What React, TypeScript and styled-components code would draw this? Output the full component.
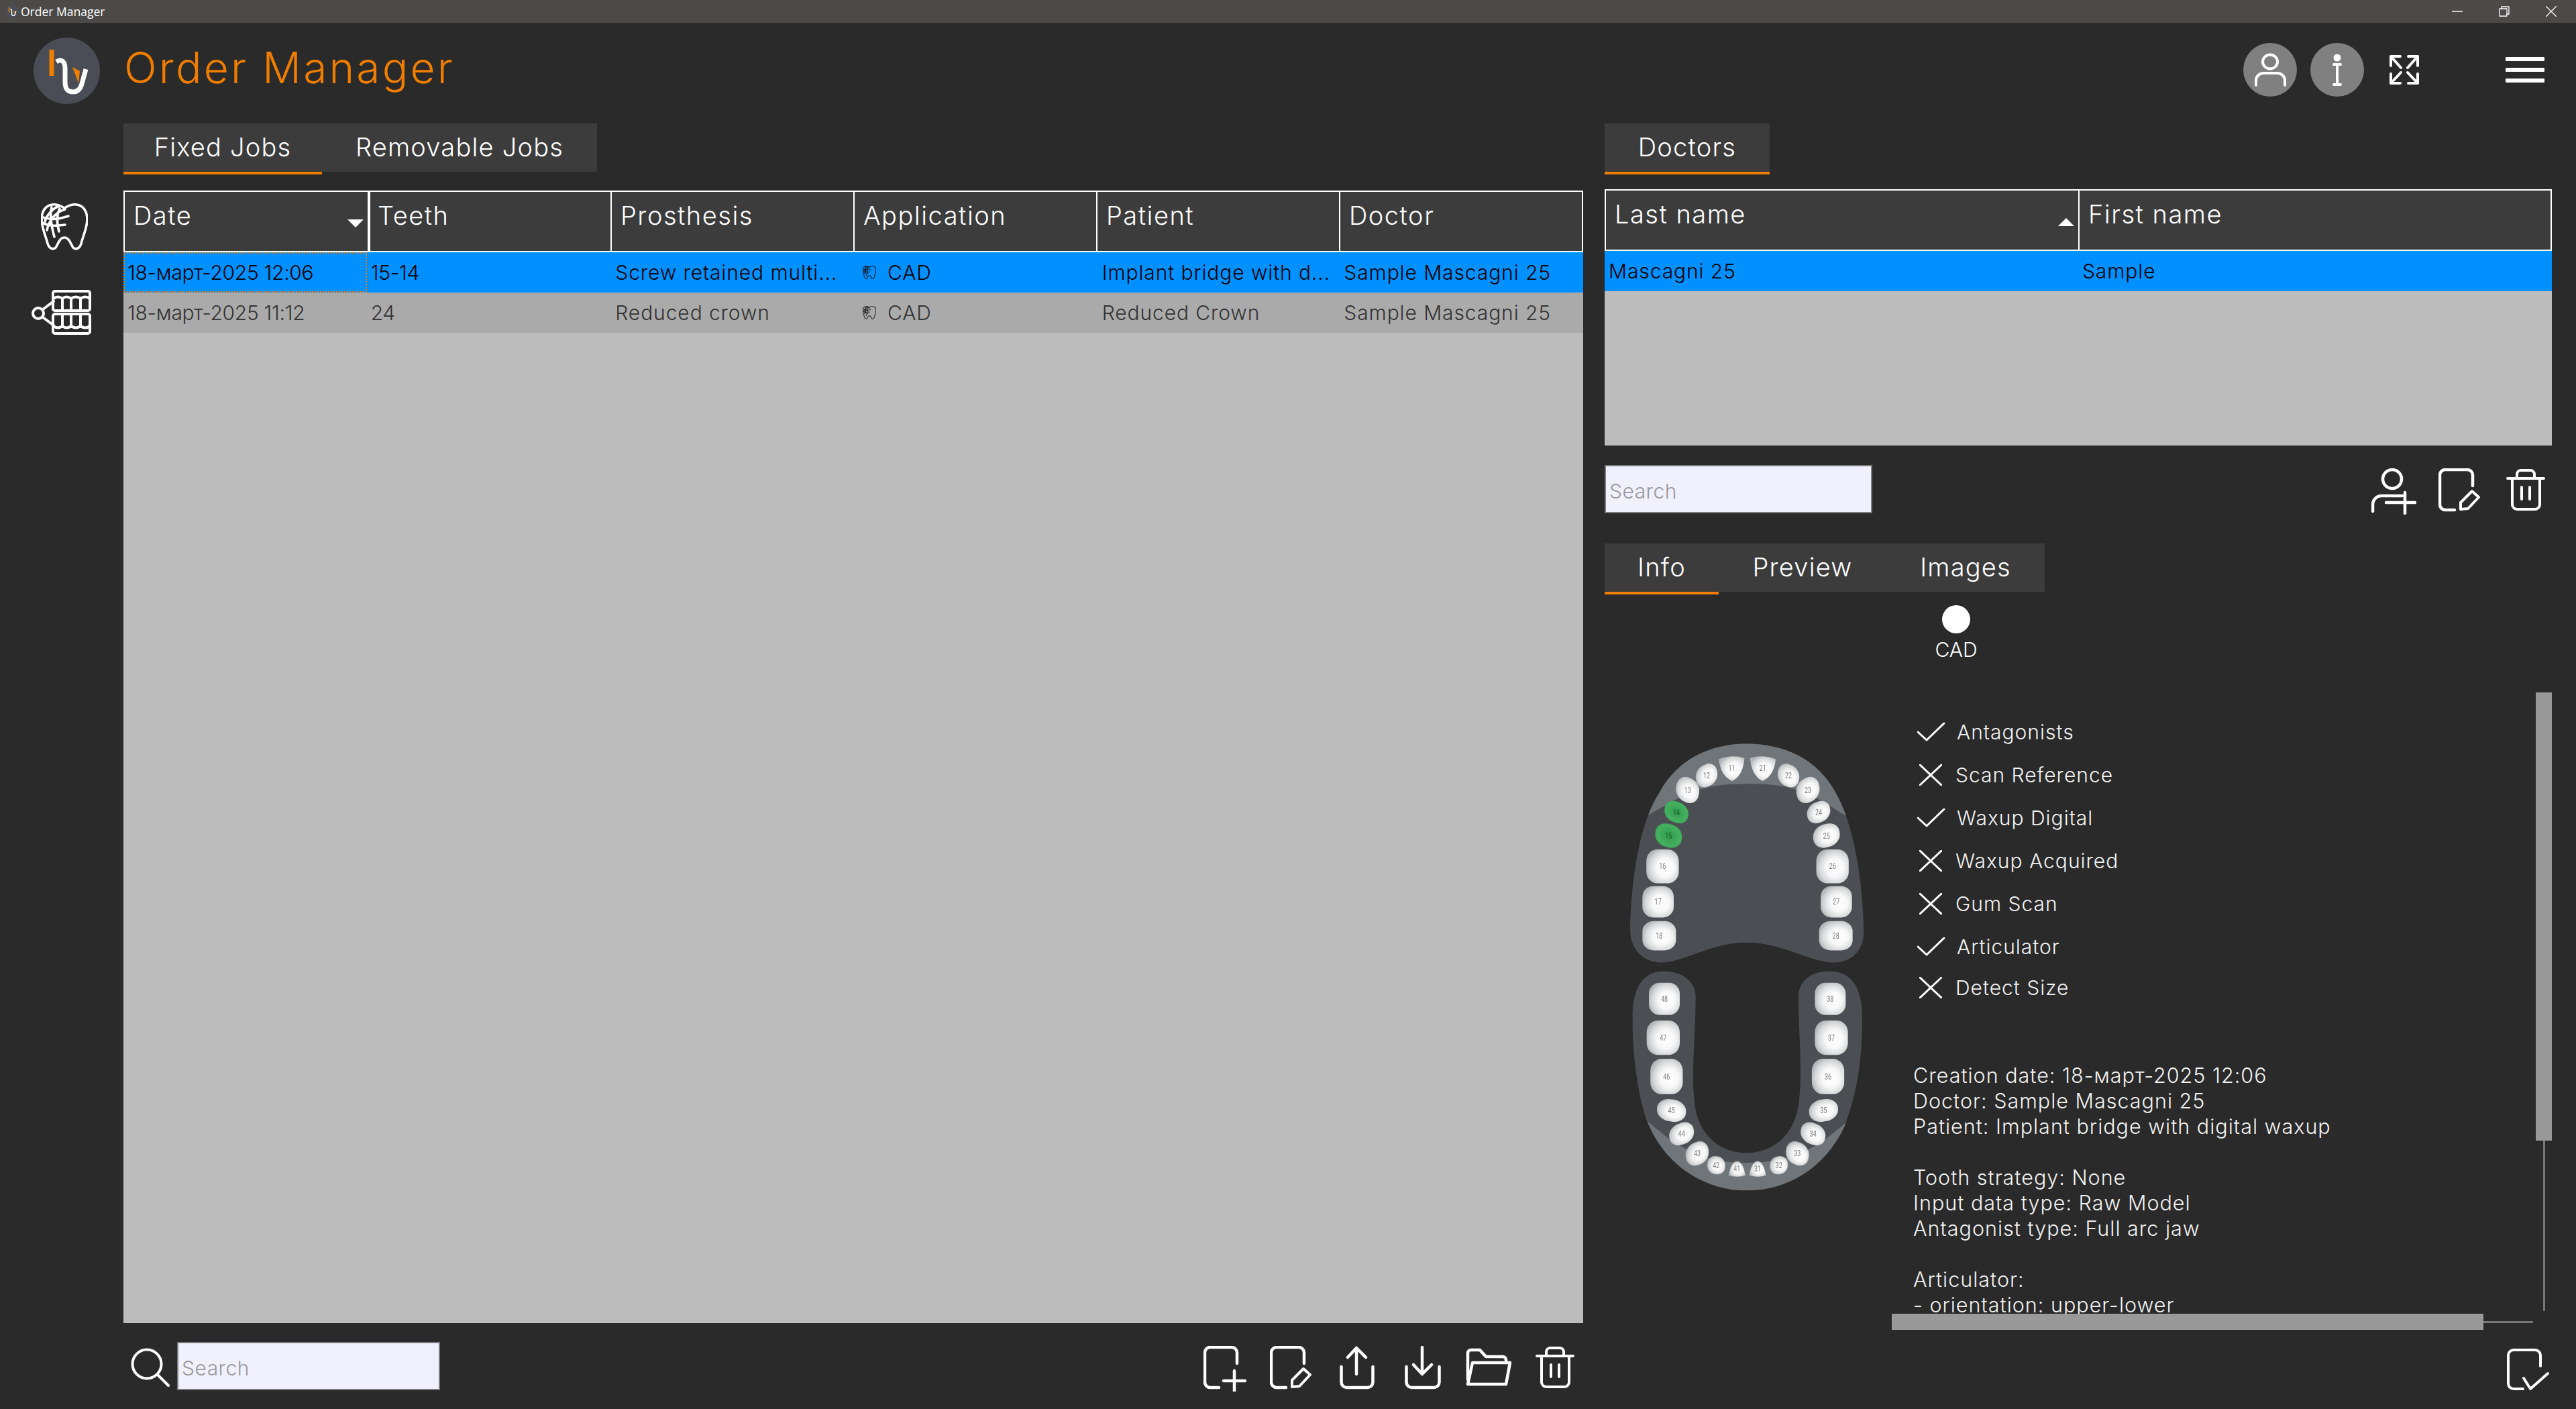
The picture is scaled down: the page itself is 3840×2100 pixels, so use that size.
import React from 'react';
import styled, { createGlobalStyle } from 'styled-components';

const FONT = '"Inter", "Liberation Sans", sans-serif';
const ORANGE = '#ef7d00';

const GlobalStyle = createGlobalStyle`
  html, body {
    margin: 0;
    padding: 0;
    background: #2a2a2a;
  }
  * {
    box-sizing: border-box;
  }
`;

const Root = styled.div`
  display: flex;
  flex-direction: column;
  width: 3840px;
  height: 2100px;
  overflow: hidden;
  background: #2a2a2a;
  color: #fff;
  font-family: ${FONT};
`;

const TitleBar = styled.div`
  display: flex;
  align-items: center;
  flex: 0 0 34px;
  padding: 0 29px 0 8px;
  background: #4b4a48;
`;

const TitleBarName = styled.span`
  margin-left: 3px;
  font-family: "Open Sans", sans-serif;
  font-size: 17.5px;
  color: #fff;
`;

const WindowControls = styled.div`
  display: flex;
  align-items: center;
  gap: 54px;
  margin-left: auto;
`;

const Header = styled.header`
  display: flex;
  align-items: flex-start;
  flex: 0 0 150px;
  padding: 22px 47px 0 50px;
`;

const Title = styled.h1`
  margin: 0 0 0 36px;
  font-size: 64px;
  line-height: 90px;
  font-weight: 300;
  letter-spacing: 3.2px;
  color: ${ORANGE};
`;

const HeaderActions = styled.div`
  display: flex;
  align-items: center;
  margin: 8px 0 0 auto;
`;

const RoundButton = styled.div`
  display: flex;
  width: 80px;
  height: 80px;
  margin-right: 20px;
  border-radius: 50%;
  background: #808080;
`;

const ExpandButton = styled.div`
  display: flex;
  margin: 0 129px 0 18px;
`;

const Hamburger = styled.div`
  display: flex;
  flex-direction: column;
  gap: 10px;
  width: 58px;
`;

const HamburgerBar = styled.span`
  height: 6px;
  background: #fff;
  border-radius: 1px;
`;

const Main = styled.main`
  display: flex;
  flex: 1;
  min-height: 0;
`;

const Sidebar = styled.nav`
  display: flex;
  flex-direction: column;
  flex: 0 0 184px;
  padding-top: 119px;
`;

const SideIcon = styled.div<{ $left: number; $top?: number }>`
  display: flex;
  margin-left: ${(p) => p.$left}px;
  margin-top: ${(p) => p.$top || 0}px;
`;

const LeftPanel = styled.section`
  display: flex;
  flex-direction: column;
  flex: 0 0 2176px;
`;

const RightPanel = styled.section`
  display: flex;
  flex-direction: column;
  flex: 0 0 1412px;
  margin-left: 32px;
`;

const Tabs = styled.div`
  display: flex;
  align-self: flex-start;
  height: 76px;
`;

const Tab = styled.div<{ $active?: boolean; $width: number }>`
  display: flex;
  justify-content: center;
  align-items: center;
  width: ${(p) => p.$width}px;
  height: 76px;
  padding-bottom: 3px;
  background: #3c3c3c;
  border-bottom: 4px solid ${(p) => (p.$active ? ORANGE : '#2a2a2a')};
  font-size: 38px;
  font-weight: 300;
  letter-spacing: 1.2px;
  white-space: nowrap;
`;

const JobsTable = styled.div`
  display: flex;
  flex-direction: column;
  flex: 1;
  min-height: 0;
  margin-top: 24px;
  background: #bcbcbc;
`;

const DoctorsTable = styled(JobsTable)`
  flex: 0 0 382px;
  margin-top: 22px;
`;

const HeaderRow = styled.div<{ $cols: number }>`
  display: grid;
  grid-template-columns: repeat(${(p) => p.$cols}, 1fr);
  height: 92px;
  border: 2px solid #fff;
  background: #3c3c3c;
`;

const HeaderCell = styled.div<{ $thick?: boolean; $first?: boolean }>`
  position: relative;
  padding: 12px 0 0 ${(p) => (p.$thick ? 11 : 13)}px;
  border-left: ${(p) => (p.$first ? 0 : p.$thick ? 4 : 2)}px solid #fff;
  font-size: 38px;
  line-height: 46px;
  font-weight: 300;
  letter-spacing: 1.5px;
`;

const SortMark = styled.span<{ $up?: boolean }>`
  position: absolute;
  right: 6px;
  top: 41px;
  width: 0;
  height: 0;
  border-left: 12px solid transparent;
  border-right: 12px solid transparent;
  ${(p) =>
    p.$up ? 'border-bottom: 12px solid #fff;' : 'border-top: 12px solid #fff;'}
`;

const DataRow = styled.div<{ $cols: number; $selected?: boolean }>`
  display: grid;
  grid-template-columns: repeat(${(p) => p.$cols}, 1fr);
  height: 60px;
  background: ${(p) => (p.$selected ? '#0090ff' : '#aaaaaa')};
  color: ${(p) => (p.$selected ? '#000' : '#333')};
`;

const DataCell = styled.div<{ $focused?: boolean; $indent?: number; $tight?: boolean }>`
  display: flex;
  align-items: center;
  overflow: hidden;
  padding-left: ${(p) => p.$indent || 4}px;
  border: 2px ${(p) => (p.$focused ? `dotted ${ORANGE}` : 'solid transparent')};
  font-size: 30px;
  font-weight: 300;
  letter-spacing: ${(p) => (p.$tight ? -0.3 : 0.9)}px;
  white-space: nowrap;
`;

const CadMark = styled.span`
  display: flex;
  margin-right: 17px;
`;

const Toolbar = styled.div`
  display: flex;
  align-items: flex-start;
  flex: 0 0 128px;
  padding-top: 28px;
`;

const SearchIcon = styled.div`
  display: flex;
  margin: 9px 11px 0 11px;
`;

const SearchInput = styled.input<{ $width: number }>`
  width: ${(p) => p.$width}px;
  height: 72px;
  padding: 6px 0 0 5px;
  background: #f0f0ff;
  border: 2px solid #7a7a7a;
  border-radius: 0;
  outline: none;
  font-family: ${FONT};
  font-size: 30px;
  font-weight: 300;
  letter-spacing: 0.5px;

  &::placeholder {
    color: #999;
    opacity: 1;
  }
`;

const IconGroup = styled.div`
  display: flex;
  margin: 6px -7px 0 auto;
`;

const IconSlot = styled.div`
  display: flex;
  justify-content: center;
  width: 98.4px;
`;

const DoctorTools = styled.div`
  display: flex;
  align-items: flex-start;
  margin: 29px 0 43px;
`;

const DoctorIconGroup = styled(IconGroup)`
  margin: 5px -10px 0 auto;
`;

const InfoArea = styled.div`
  display: flex;
  flex-direction: column;
  flex: 1;
  min-height: 0;
`;

const TypeBlock = styled.div`
  display: flex;
  flex-direction: column;
  align-items: center;
  flex: 0 0 146px;
  width: 120px;
  margin-left: 464px;
  padding-top: 16px;
`;

const TypeDot = styled.span`
  width: 42px;
  height: 42px;
  border-radius: 50%;
  background: #fff;
`;

const TypeLabel = styled.span`
  margin-top: 6px;
  font-size: 30px;
  line-height: 36px;
  font-weight: 300;
`;

const InfoBody = styled.div`
  display: flex;
`;

const JawColumn = styled.div`
  flex: 0 0 428px;
  padding: 49px 0 0 8px;
`;

const DetailsPane = styled.div`
  display: grid;
  grid-template-columns: 960px 24px;
  grid-template-rows: 926px 24px;
  flex: 0 0 984px;
`;

const DetailsContent = styled.div`
  overflow: hidden;
  padding-top: 27px;
`;

const ChecksList = styled.ul`
  list-style: none;
  margin: 0;
  padding: 0 0 0 38px;
`;

const CheckRow = styled.li`
  display: flex;
  align-items: center;
  height: 64px;
  font-size: 30px;
  color: #f2f2f2;
  font-weight: 300;
  letter-spacing: 1px;

  &:last-child {
    margin-top: -3px;
  }
`;

const CheckIcon = styled.span`
  display: flex;
  justify-content: center;
  flex: 0 0 40px;
  margin-right: 17px;
`;

const Specs = styled.div`
  margin-top: 80px;
  padding-left: 32px;
  font-size: 30.5px;
  line-height: 38px;
  font-weight: 300;
  letter-spacing: 1px;
  color: #f2f2f2;
`;

const SpecGroup = styled.div`
  margin-bottom: 38px;
`;

const VTrack = styled.div`
  position: relative;
  display: flex;
  justify-content: center;
  height: 922px;

  &::before {
    content: '';
    width: 3px;
    height: 100%;
    background: #777;
  }
`;

const VThumb = styled.div`
  position: absolute;
  top: 0;
  left: 0;
  width: 24px;
  height: 668px;
  background: #999;
`;

const HTrack = styled.div`
  position: relative;
  display: flex;
  align-items: center;
  width: 956px;

  &::before {
    content: '';
    width: 100%;
    height: 3px;
    background: #777;
  }
`;

const HThumb = styled.div`
  position: absolute;
  top: 0;
  left: 0;
  width: 882px;
  height: 24px;
  background: #999;
`;

const ConfirmRow = styled.div`
  display: flex;
  justify-content: flex-end;
  padding: 28px 4px 0 0;
`;

const Line = styled.svg.attrs({ fill: 'none', stroke: '#fff', strokeLinecap: 'round', strokeLinejoin: 'round' })``;

const Logo = ({ size }: { size: number }) => (
  <svg width={size} height={size} viewBox="50 56 99 99">
    <circle cx="99.5" cy="105.5" r="49.5" fill="#4a4d55" />
    <rect x="73.5" y="74" width="7" height="39" fill={ORANGE} />
    <path d="M108 100 L119 106 L117 124 Z" fill={ORANGE} />
    <path
      d="M84 92 C92 87 97 92 97 102 L97 122 C97 135 103 137 109 137 C116 137 120 132 122 125 L128 103"
      fill="none"
      stroke="#fff"
      strokeWidth="7"
    />
  </svg>
);

const ToothIcon = ({ size, color, width }: { size: number; color: string; width: number }) => (
  <Line width={size} height={size} viewBox="0 0 70 70" strokeWidth={width} style={{ stroke: color }}>
    <path d="M35 7C42 3 48 1 53 2C63 3 69 12 69 24C69 36 63 48 60 60C58 67 52 70 48 66C44 60 42 51 35 51C28 51 26 60 22 66C18 70 12 67 10 60C7 48 1 36 1 24C1 12 7 3 17 2C22 1 28 3 35 7" />
    <path d="M36 9C24 12 12 24 9 40M27 4C17 8 8 18 5 30M3 21C20 26 30 22 41 19M4 30C15 35 25 33 36 32M16 6C13 18 15 32 20 50M28 8C23 18 23 28 27 42" />
  </Line>
);

const ArticulatorIcon = () => (
  <Line width="90" height="67" viewBox="0 0 90 67" strokeWidth="4">
    <circle cx="11" cy="35" r="8" />
    <path d="M18 29L34 17M18 41L34 53" />
    <rect x="33" y="2" width="55" height="29" rx="3" />
    <rect x="33" y="36" width="55" height="29" rx="3" />
    <path d="M34 13q6-5 13 0q6-5 13 0q7-5 14 0q7-5 14 0M47 13V30M60 13V30M74 13V30" />
    <path d="M34 54q6 5 13 0q6 5 13 0q7 5 14 0q7 5 14 0M47 37V54M60 37V54M74 37V54" />
  </Line>
);

const MinimizeIcon = () => (
  <Line width="16" height="16" viewBox="0 0 16 16" strokeWidth="1.4" strokeLinecap="butt">
    <path d="M0 8H16" />
  </Line>
);

const RestoreIcon = () => (
  <Line width="16" height="16" viewBox="0 0 16 16" strokeWidth="1.3" strokeLinecap="butt">
    <rect x="1" y="4" width="11" height="11" />
    <path d="M4 4V1H15V12H12" />
  </Line>
);

const CloseIcon = () => (
  <Line width="16" height="16" viewBox="0 0 16 16" strokeWidth="1.3" strokeLinecap="butt">
    <path d="M0 0L16 16M16 0L0 16" />
  </Line>
);

const PersonIcon = () => (
  <Line width="80" height="80" viewBox="0 0 80 80" strokeWidth="4">
    <ellipse cx="40" cy="28" rx="11" ry="10.5" />
    <path d="M19 63V56A11 11 0 0 1 30 45H51A11 11 0 0 1 62 56V63" />
  </Line>
);

const InfoIcon = () => (
  <Line width="80" height="80" viewBox="0 0 80 80" strokeWidth="4">
    <circle cx="40" cy="22" r="3.5" fill="#fff" />
    <path d="M35 32H45M40 32V62M35 62H45" />
  </Line>
);

const ExpandIcon = () => (
  <Line width="44" height="44" viewBox="0 0 44 44" strokeWidth="4">
    <path d="M2 16V2H16M2 2L17 19M28 2H42V16M42 2L27 19M2 28V42H16M2 42L17 26M42 28V42H28M42 42L27 26" />
  </Line>
);

const MagnifierIcon = () => (
  <Line width="58" height="58" viewBox="0 0 58 58" strokeWidth="4">
    <circle cx="24" cy="24" r="21.5" />
    <path d="M41 41L56 56" />
  </Line>
);

const DocPlusIcon = () => (
  <Line width="64" height="68" viewBox="0 0 64 68" strokeWidth="4.5">
    <path d="M50 26V10A8 8 0 0 0 42 2H10A8 8 0 0 0 2 10V54A8 8 0 0 0 10 62H23" />
    <path d="M30 52H62M46 37V67" />
  </Line>
);

const DocEditIcon = () => (
  <Line width="62" height="68" viewBox="0 0 62 68" strokeWidth="4.5">
    <path d="M51 26V10A8 8 0 0 0 43 2H10A8 8 0 0 0 2 10V54A8 8 0 0 0 10 62H24" />
    <path d="M33 51L50 34L60 43L44 60L33 61Z" strokeWidth="4" />
  </Line>
);

const UploadIcon = () => (
  <Line width="52" height="68" viewBox="0 0 52 68" strokeWidth="4.5">
    <path d="M2.5 31V54A8 8 0 0 0 10 62H42A8 8 0 0 0 49.5 54V31" />
    <path d="M25 42V3M12 17L25 3L39 17" />
  </Line>
);

const DownloadIcon = () => (
  <Line width="54" height="68" viewBox="0 0 54 68" strokeWidth="4.5">
    <path d="M2.5 31V54A8 8 0 0 0 10 62H44A8 8 0 0 0 51.5 54V31" />
    <path d="M26 2V41M13 28L26 42L40 28" />
  </Line>
);

const FolderIcon = () => (
  <Line width="68" height="68" viewBox="0 0 68 68" strokeWidth="4.5">
    <path d="M3 50V10A5 5 0 0 1 8 6H21L30 16H56A5 5 0 0 1 60 21V25" />
    <path d="M10 25H66L60 57H3Z" />
  </Line>
);

const TrashIcon = () => (
  <Line width="58" height="68" viewBox="0 0 58 68" strokeWidth="4">
    <path d="M2 15H56M16 15V9A6 6 0 0 1 22 3H36A6 6 0 0 1 42 9V15" />
    <path d="M9 15V54A7 7 0 0 0 16 61H43A7 7 0 0 0 50 54V15M23 28V46M35 28V46" />
  </Line>
);

const PersonPlusIcon = () => (
  <Line width="67" height="69" viewBox="0 0 67 69" strokeWidth="4.5">
    <circle cx="31" cy="16" r="14" />
    <path d="M2 64V54A13 13 0 0 1 15 41H46" />
    <path d="M22 51H65M50 36V67" />
  </Line>
);

const DocCheckIcon = () => (
  <Line width="63" height="64" viewBox="0 0 63 64" strokeWidth="4">
    <path d="M50 26V10A8 8 0 0 0 42 2H10A8 8 0 0 0 2 10V52A8 8 0 0 0 10 60H24" />
    <path d="M25 44L35 60L61 37" />
  </Line>
);

const CheckMark = () => (
  <Line width="42" height="28" viewBox="0 0 42 28" strokeWidth="3" strokeLinecap="butt">
    <path d="M1 14L14 26L40 1" />
  </Line>
);

const CrossMark = () => (
  <Line width="34" height="32" viewBox="0 0 34 32" strokeWidth="3" strokeLinecap="butt">
    <path d="M1 1L33 31M33 1L1 31" />
  </Line>
);

type ToothSpot = {
  n: number;
  x: number;
  y: number;
  w: number;
  h: number;
  kind?: 'incisor' | 'lowerIncisor';
  r?: number;
};

const upperLeft: ToothSpot[] = [
  { n: 11, x: 545, y: 140, w: 115, h: 80, kind: 'incisor', r: -2 },
  { n: 12, x: 432, y: 163, w: 98, h: 72, r: -18 },
  { n: 13, x: 347, y: 210, w: 105, h: 80, r: 18 },
  { n: 14, x: 297, y: 282, w: 108, h: 68, r: 14 },
  { n: 15, x: 262, y: 358, w: 120, h: 76, r: 10 },
  { n: 16, x: 235, y: 458, w: 145, h: 110 },
  { n: 17, x: 215, y: 573, w: 140, h: 102 },
  { n: 18, x: 220, y: 683, w: 150, h: 95 },
];

const upperRight: ToothSpot[] = [
  { n: 21, x: 683, y: 140, w: 115, h: 80, kind: 'incisor', r: 2 },
  { n: 22, x: 798, y: 163, w: 98, h: 72, r: 18 },
  { n: 23, x: 885, y: 210, w: 105, h: 80, r: -18 },
  { n: 24, x: 933, y: 282, w: 105, h: 68, r: -14 },
  { n: 25, x: 968, y: 358, w: 120, h: 76, r: -10 },
  { n: 26, x: 995, y: 458, w: 145, h: 110 },
  { n: 27, x: 1012, y: 573, w: 140, h: 102 },
  { n: 28, x: 1010, y: 683, w: 150, h: 95 },
];

const lowerRight: ToothSpot[] = [
  { n: 48, x: 243, y: 888, w: 138, h: 105 },
  { n: 47, x: 238, y: 1014, w: 148, h: 112 },
  { n: 46, x: 253, y: 1140, w: 145, h: 115 },
  { n: 45, x: 275, y: 1250, w: 130, h: 72, r: 6 },
  { n: 44, x: 320, y: 1326, w: 112, h: 70, r: -14 },
  { n: 43, x: 390, y: 1390, w: 104, h: 74, r: -16 },
  { n: 42, x: 475, y: 1428, w: 80, h: 58, r: 6 },
  { n: 41, x: 568, y: 1440, w: 75, h: 50, kind: 'lowerIncisor' },
];

const lowerLeft: ToothSpot[] = [
  { n: 38, x: 985, y: 888, w: 138, h: 105 },
  { n: 37, x: 990, y: 1014, w: 148, h: 112 },
  { n: 36, x: 975, y: 1140, w: 145, h: 115 },
  { n: 35, x: 955, y: 1250, w: 130, h: 72, r: -6 },
  { n: 34, x: 908, y: 1326, w: 112, h: 70, r: 14 },
  { n: 33, x: 838, y: 1390, w: 104, h: 74, r: 16 },
  { n: 32, x: 755, y: 1428, w: 80, h: 58, r: -6 },
  { n: 31, x: 660, y: 1440, w: 75, h: 50, kind: 'lowerIncisor' },
];

const selectedTeeth = [14, 15];

const ToothShape = ({ spot }: { spot: ToothSpot }) => {
  const { n, x, y, w, h, kind, r } = spot;
  const green = selectedTeeth.includes(n);
  const fill = green ? 'url(#toothGreen)' : 'url(#toothWhite)';
  const hw = w / 2;
  const hh = h / 2;
  let shape = (
    <rect
      x={-hw}
      y={-hh}
      width={w}
      height={h}
      rx={hw * (h < 85 ? 0.9 : 0.68)}
      ry={hh * (h < 85 ? 0.92 : 0.68)}
      fill={fill}
    />
  );
  if (kind === 'incisor') {
    shape = (
      <path
        d={`M${-hw} ${-hh + 8}Q0 ${-hh - 6} ${hw} ${-hh + 8}Q${hw - 6} ${hh - 22} 8 ${hh - 2}Q0 ${hh + 3} -8 ${hh - 2}Q${-hw + 6} ${hh - 22} ${-hw} ${-hh + 8}Z`}
        fill={fill}
      />
    );
  }
  if (kind === 'lowerIncisor') {
    shape = (
      <path
        d={`M${-hw} ${hh - 4}Q0 ${hh + 4} ${hw} ${hh - 4}Q${hw - 12} ${-hh} 0 ${-hh}Q${-hw + 12} ${-hh} ${-hw} ${hh - 4}Z`}
        fill={fill}
      />
    );
  }
  return (
    <g>
      <g transform={`translate(${x} ${y}) rotate(${r || 0})`}>{shape}</g>
      <text
        x={x}
        y={y + 9}
        textAnchor="middle"
        fontFamily="Roboto, sans-serif"
        fontSize="27"
        fill={green ? '#1f5f30' : '#7d7d7d'}
      >
        {n}
      </text>
    </g>
  );
};

// traced on the 1260x1568 crop grid, hence preserveAspectRatio none
const JawChart = () => (
  <svg width="420" height="720" viewBox="0 0 1260 1568" preserveAspectRatio="none">
    <defs>
      <radialGradient id="toothWhite" cx="58%" cy="54%" r="60%">
        <stop offset="0%" stopColor="#ffffff" />
        <stop offset="45%" stopColor="#f8f8f8" />
        <stop offset="80%" stopColor="#d4d6d8" />
        <stop offset="100%" stopColor="#b4b7ba" />
      </radialGradient>
      <radialGradient id="toothGreen" cx="50%" cy="50%" r="60%">
        <stop offset="0%" stopColor="#2f9a4c" />
        <stop offset="70%" stopColor="#45b05f" />
        <stop offset="100%" stopColor="#3aa555" />
      </radialGradient>
      <clipPath id="upperBand">
        <path d="M150 300L260 255C400 195 500 190 620 190C760 190 850 200 980 260L1090 310V0H150Z" />
      </clipPath>
      <clipPath id="lowerBand">
        <path d="M140 1270L260 1340C400 1410 500 1420 610 1420C740 1420 860 1400 970 1340L1090 1270V1568H140Z" />
      </clipPath>
      <filter id="soft">
        <feGaussianBlur stdDeviation="1.6" />
      </filter>
    </defs>
    <g filter="url(#soft)">
      <path
        d="M90 660C95 500 130 320 220 220C300 110 450 60 610 60C780 60 930 110 1010 220C1090 320 1130 500 1135 670C1135 730 1080 770 1000 770C900 770 770 705 610 705C450 705 330 770 230 770C150 770 90 730 90 660Z"
        fill="#4c4f52"
      />
      <path
        d="M90 660C95 500 130 320 220 220C300 110 450 60 610 60C780 60 930 110 1010 220C1090 320 1130 500 1135 670C1135 730 1080 770 1000 770C900 770 770 705 610 705C450 705 330 770 230 770C150 770 90 730 90 660Z"
        fill="#70747a"
        clipPath="url(#upperBand)"
      />
      <path
        d="M240 798C150 798 100 850 100 950C100 1100 140 1250 175 1300C260 1440 440 1510 610 1510C790 1510 960 1440 1050 1300C1100 1200 1128 1100 1128 950C1128 850 1080 798 980 798C900 798 843 830 843 880C843 1000 860 1100 848 1200C840 1320 740 1388 610 1388C480 1388 380 1320 375 1200C365 1100 383 1000 383 880C383 830 320 798 240 798Z"
        fill="#4c4f52"
      />
      <path
        d="M240 798C150 798 100 850 100 950C100 1100 140 1250 175 1300C260 1440 440 1510 610 1510C790 1510 960 1440 1050 1300C1100 1200 1128 1100 1128 950C1128 850 1080 798 980 798C900 798 843 830 843 880C843 1000 860 1100 848 1200C840 1320 740 1388 610 1388C480 1388 380 1320 375 1200C365 1100 383 1000 383 880C383 830 320 798 240 798Z"
        fill="#70747a"
        clipPath="url(#lowerBand)"
      />
      {[...upperLeft, ...upperRight, ...lowerRight, ...lowerLeft].map((spot) => (
        <ToothShape key={spot.n} spot={spot} />
      ))}
    </g>
  </svg>
);

const jobColumns = ['Date', 'Teeth', 'Prosthesis', 'Application', 'Patient', 'Doctor'];

const jobs = [
  {
    date: '18-март-2025 12:06',
    teeth: '15-14',
    prosthesis: 'Screw retained multi...',
    patient: 'Implant bridge with d...',
    doctor: 'Sample Mascagni 25',
    selected: true,
  },
  {
    date: '18-март-2025 11:12',
    teeth: '24',
    prosthesis: 'Reduced crown',
    patient: 'Reduced Crown',
    doctor: 'Sample Mascagni 25',
    selected: false,
  },
];

const checks = [
  { label: 'Antagonists', done: true },
  { label: 'Scan Reference', done: false },
  { label: 'Waxup Digital', done: true },
  { label: 'Waxup Acquired', done: false },
  { label: 'Gum Scan', done: false },
  { label: 'Articulator', done: true },
  { label: 'Detect Size', done: false },
];

const specs = [
  [
    'Creation date: 18-март-2025 12:06',
    'Doctor: Sample Mascagni 25',
    'Patient: Implant bridge with digital waxup',
  ],
  ['Tooth strategy: None', 'Input data type: Raw Model', 'Antagonist type: Full arc jaw'],
  ['Articulator:', '- orientation: upper-lower'],
];

const App = () => {
  return (
    <Root>
      <GlobalStyle />
      <TitleBar>
        <Logo size={20} />
        <TitleBarName>Order Manager</TitleBarName>
        <WindowControls>
          <MinimizeIcon />
          <RestoreIcon />
          <CloseIcon />
        </WindowControls>
      </TitleBar>

      <Header>
        <Logo size={99} />
        <Title>Order Manager</Title>
        <HeaderActions>
          <RoundButton>
            <PersonIcon />
          </RoundButton>
          <RoundButton>
            <InfoIcon />
          </RoundButton>
          <ExpandButton>
            <ExpandIcon />
          </ExpandButton>
          <Hamburger>
            <HamburgerBar />
            <HamburgerBar />
            <HamburgerBar />
          </Hamburger>
        </HeaderActions>
      </Header>

      <Main>
        <Sidebar>
          <SideIcon $left={61}>
            <ToothIcon size={70} color="#fff" width={3.6} />
          </SideIcon>
          <SideIcon $left={46} $top={59}>
            <ArticulatorIcon />
          </SideIcon>
        </Sidebar>

        <LeftPanel>
          <Tabs>
            <Tab $active $width={296}>Fixed Jobs</Tab>
            <Tab $width={410}>Removable Jobs</Tab>
          </Tabs>
          <JobsTable>
            <HeaderRow $cols={6}>
              {jobColumns.map((column, i) => (
                <HeaderCell key={column} $first={i === 0} $thick={i === 1}>
                  {column}
                  {i === 0 && <SortMark />}
                </HeaderCell>
              ))}
            </HeaderRow>
            {jobs.map((job) => (
              <DataRow key={job.date} $cols={6} $selected={job.selected}>
                <DataCell $focused={job.selected} $tight>{job.date}</DataCell>
                <DataCell $tight>{job.teeth}</DataCell>
                <DataCell $indent={6}>{job.prosthesis}</DataCell>
                <DataCell $indent={12}>
                  <CadMark>
                    <ToothIcon size={20} color={job.selected ? '#123' : '#333'} width={4} />
                  </CadMark>
                  CAD
                </DataCell>
                <DataCell $indent={6}>{job.patient}</DataCell>
                <DataCell>{job.doctor}</DataCell>
              </DataRow>
            ))}
          </JobsTable>
          <Toolbar>
            <SearchIcon>
              <MagnifierIcon />
            </SearchIcon>
            <SearchInput $width={392} placeholder="Search" />
            <IconGroup>
              <IconSlot><DocPlusIcon /></IconSlot>
              <IconSlot><DocEditIcon /></IconSlot>
              <IconSlot><UploadIcon /></IconSlot>
              <IconSlot><DownloadIcon /></IconSlot>
              <IconSlot><FolderIcon /></IconSlot>
              <IconSlot><TrashIcon /></IconSlot>
            </IconGroup>
          </Toolbar>
        </LeftPanel>

        <RightPanel>
          <Tabs>
            <Tab $active $width={246}>Doctors</Tab>
          </Tabs>
          <DoctorsTable>
            <HeaderRow $cols={2}>
              <HeaderCell $first>
                Last name
                <SortMark $up />
              </HeaderCell>
              <HeaderCell>First name</HeaderCell>
            </HeaderRow>
            <DataRow $cols={2} $selected>
              <DataCell>Mascagni 25</DataCell>
              <DataCell>Sample</DataCell>
            </DataRow>
          </DoctorsTable>
          <DoctorTools>
            <SearchInput $width={399} placeholder="Search" />
            <DoctorIconGroup>
              <IconSlot><PersonPlusIcon /></IconSlot>
              <IconSlot><DocEditIcon /></IconSlot>
              <IconSlot><TrashIcon /></IconSlot>
            </DoctorIconGroup>
          </DoctorTools>
          <Tabs>
            <Tab $active $width={170}>Info</Tab>
            <Tab $width={250}>Preview</Tab>
            <Tab $width={236}>Images</Tab>
          </Tabs>
          <InfoArea>
            <TypeBlock>
              <TypeDot />
              <TypeLabel>CAD</TypeLabel>
            </TypeBlock>
            <InfoBody>
              <JawColumn>
                <JawChart />
              </JawColumn>
              <DetailsPane>
                <DetailsContent>
                  <ChecksList>
                    {checks.map((check) => (
                      <CheckRow key={check.label}>
                        <CheckIcon>{check.done ? <CheckMark /> : <CrossMark />}</CheckIcon>
                        {check.label}
                      </CheckRow>
                    ))}
                  </ChecksList>
                  <Specs>
                    {specs.map((group) => (
                      <SpecGroup key={group[0]}>
                        {group.map((line) => (
                          <div key={line}>{line}</div>
                        ))}
                      </SpecGroup>
                    ))}
                  </Specs>
                </DetailsContent>
                <VTrack>
                  <VThumb />
                </VTrack>
                <HTrack>
                  <HThumb />
                </HTrack>
              </DetailsPane>
            </InfoBody>
            <ConfirmRow>
              <DocCheckIcon />
            </ConfirmRow>
          </InfoArea>
        </RightPanel>
      </Main>
    </Root>
  );
};

export default App;
